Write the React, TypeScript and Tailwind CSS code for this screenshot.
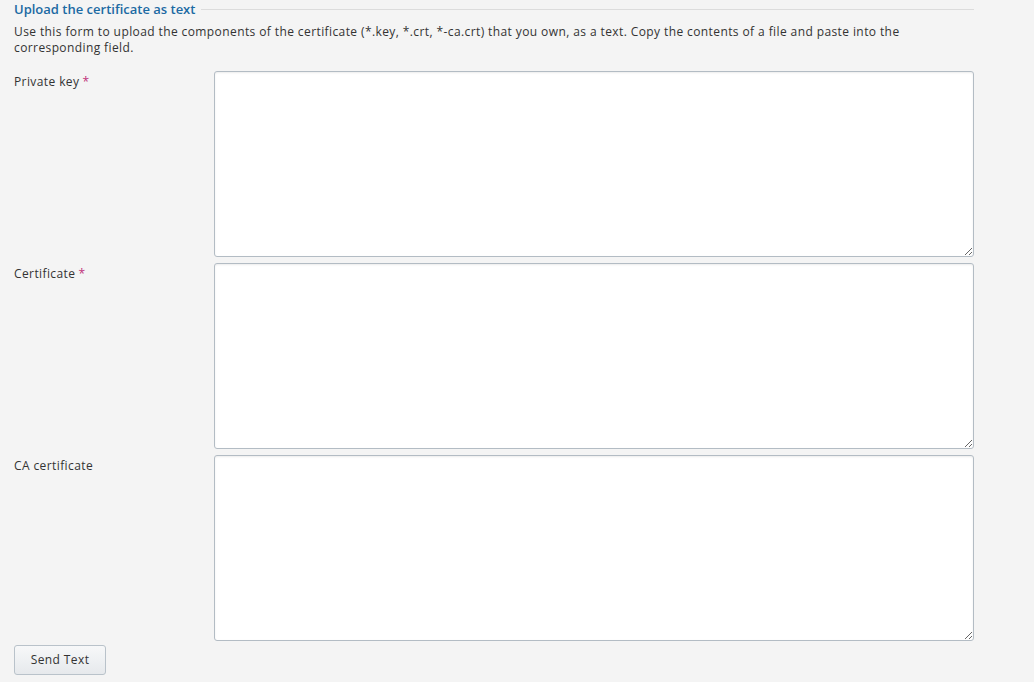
import React from "react";

function Field({ label, required }: { label: string; required?: boolean }) {
  return (
    <div className="flex">
      <div className="w-[200px] pt-[3px] text-[12px] leading-[16px] tracking-[0.4px] text-[#333]">
        {label}
        {required && <span className="ml-[3px] text-[#c0307a]">*</span>}
      </div>
      <textarea className="h-[186px] w-[760px] rounded-[3px] border border-[#b3bcc4] bg-white shadow-[inset_0_1px_2px_rgba(0,0,0,0.08)] outline-none" />
    </div>
  );
}

export default function App() {
  return (
    <div
      className="min-h-[682px] w-full bg-[#f4f4f4] pl-[14px]"
      style={{ fontFamily: '"Open Sans", "Liberation Sans", Arial, sans-serif' }}
    >
      <div className="flex w-[960px] items-center pt-[1px]">
        <h2 className="text-[13px] font-semibold leading-[16px] text-[#1c6aa3]">
          Upload the certificate as text
        </h2>
        <div className="ml-[6px] h-px flex-1 bg-[#dcdcdc]" />
      </div>
      <p className="mt-[7px] w-[900px] text-[12px] leading-[16px] tracking-[0.4px] text-[#333]">
        Use this form to upload the components of the certificate (*.key, *.crt, *-ca.crt) that you own, as a text. Copy the contents of a file and paste into the corresponding field.
      </p>
      <div className="mt-[15px] flex flex-col gap-[6px]">
        <Field label="Private key" required />
        <Field label="Certificate" required />
        <Field label="CA certificate" />
      </div>
      <button className="mt-[4px] h-[30px] w-[92px] rounded-[3px] border border-[#b9c2ca] bg-gradient-to-b from-[#f7f8f9] to-[#e6e9ec] text-[12px] tracking-[0.4px] text-[#333]">
        Send Text
      </button>
    </div>
  );
}
